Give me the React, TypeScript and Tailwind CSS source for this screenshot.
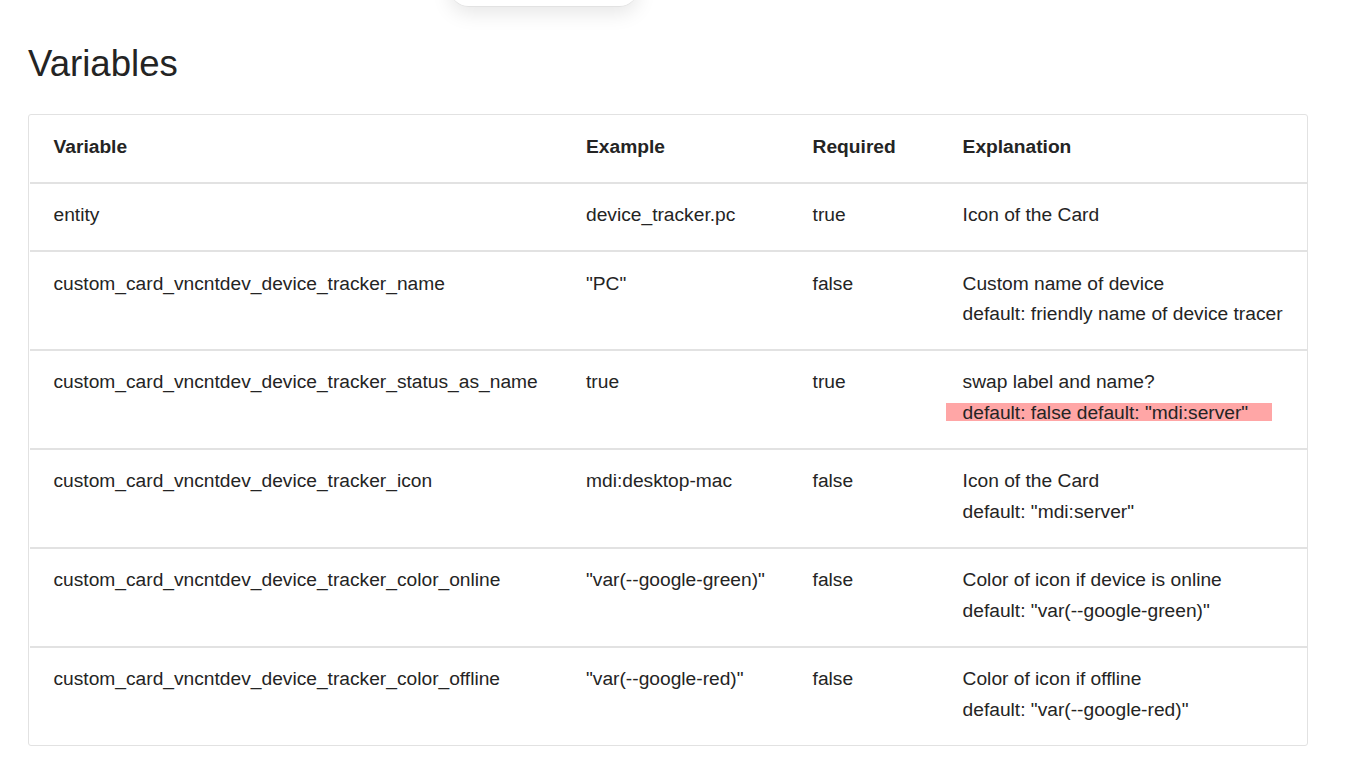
import React from "react";

const rows: [string, string, string, React.ReactNode][] = [
  ["entity", "device_tracker.pc", "true", "Icon of the Card"],
  ["custom_card_vncntdev_device_tracker_name", '"PC"', "false", <>Custom name of device<br />default: friendly name of device tracer</>],
  ["custom_card_vncntdev_device_tracker_status_as_name", "true", "true", <>swap label and name?<br /><span className="inline-block h-[18px] leading-[20px] bg-[#ffa6a6] -ml-[17px] pl-[17px] pr-[24px] whitespace-nowrap">default: false default: "mdi:server"</span></>],
  ["custom_card_vncntdev_device_tracker_icon", "mdi:desktop-mac", "false", <>Icon of the Card<br />default: "mdi:server"</>],
  ["custom_card_vncntdev_device_tracker_color_online", '"var(--google-green)"', "false", <>Color of icon if device is online<br />default: "var(--google-green)"</>],
  ["custom_card_vncntdev_device_tracker_color_offline", '"var(--google-red)"', "false", <>Color of icon if offline<br />default: "var(--google-red)"</>],
];

const padX = ["pl-[23.5px]", "pl-[23px]", "pl-[22.6px]", "pl-[22.6px]"];

export default function App() {
  return (
    <div className="relative h-[773px] overflow-hidden bg-white text-[#242424] font-['Liberation_Sans',Arial,sans-serif]">
      <div className="absolute left-[450px] -top-[30px] w-[188px] h-[37px] rounded-[20px] bg-white border-b border-[#e2e2e2] shadow-[0_6px_20px_rgba(0,0,0,0.1)]" />
      <div className="pl-[28px] w-[1308px]">
        <h1 className="pt-[40px] h-[114px] text-[36.6px] leading-[47px] font-normal">Variables</h1>
        <div className="w-[1280px] h-[632px] border border-[#e2e2e2] rounded-[3px] pl-px">
          <table className="w-full table-fixed border-collapse text-[19.2px] leading-[31px]">
            <colgroup>
              <col className="w-[533px]" />
              <col className="w-[227px]" />
              <col className="w-[150px]" />
              <col />
            </colgroup>
            <thead>
              <tr className="h-[68px] border-b-2 border-[#e2e2e2]">
                {["Variable", "Example", "Required", "Explanation"].map((h, j) => (
                  <th key={h} className={padX[j] + " pb-[4px] text-left font-bold align-middle whitespace-nowrap"}>{h}</th>
                ))}
              </tr>
            </thead>
            <tbody>
              {rows.map((r, i) => (
                <tr key={i} className={(i === rows.length - 1 ? "" : "border-b-2 border-[#e2e2e2] ") + (i === 1 ? "leading-[30px]" : "")}>
                  {r.map((c, j) => (
                    <td key={j} className={padX[j] + (i === 1 ? " pt-[17px] pb-[20px] align-top whitespace-nowrap" : " pt-[15px] pb-[20px] align-top whitespace-nowrap")}>{c}</td>
                  ))}
                </tr>
              ))}
            </tbody>
          </table>
        </div>
      </div>
    </div>
  );
}
